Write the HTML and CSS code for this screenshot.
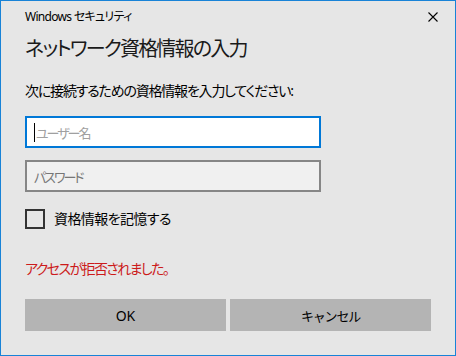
FILE: index.html
```html
<!DOCTYPE html>
<html lang="ja">
<head>
    <meta charset="UTF-8">
    <title>Windows セキュリティ</title>
    <link rel="stylesheet" href="styles.css">
</head>
<body>
    <div class="window">
        <!-- Title bar -->
        <header class="titlebar">
            <span class="app-name">Windows セキュリティ</span>
            <button class="close" aria-label="閉じる">
                <svg width="10" height="10" viewBox="0 0 10 10">
                    <path d="M0.5 0.5 L9.5 9.5 M9.5 0.5 L0.5 9.5" stroke="#000" stroke-width="1.1" fill="none"/>
                </svg>
            </button>
        </header>

        <h1 class="heading">ネットワーク資格情報の入力</h1>
        <p class="prompt">次に接続するための資格情報を入力してください:</p>

        <!-- Credential fields -->
        <div class="field field-focus">
            <span class="caret"></span>
            <span class="placeholder">ユーザー名</span>
        </div>
        <div class="field field-password">
            <span class="placeholder">パスワード</span>
        </div>

        <label class="remember">
            <span class="checkbox"></span>
            <span>資格情報を記憶する</span>
        </label>

        <p class="error">アクセスが拒否されました。</p>

        <div class="actions">
            <button class="btn">OK</button>
            <button class="btn btn-kana">キャンセル</button>
        </div>
    </div>
</body>
</html>
```

FILE: styles.css
```css
/* Reset */
body, h1, p, button {
    margin: 0;
    padding: 0;
}

body {
    font-family: "Noto Sans", "Noto Sans CJK JP", sans-serif;
    font-feature-settings: "palt";
    color: #000;
    background: #e6e6e6;
}

.window {
    width: 456px;
    height: 356px;
    box-sizing: border-box;
    border: 1px solid #1883d7;
    background: #e6e6e6;
    padding: 8px 24px 0 24px;
    display: flex;
    flex-direction: column;
}

/* Title bar */
.titlebar {
    display: flex;
    justify-content: space-between;
    align-items: center;
    height: 16px;
    font-size: 12px;
    line-height: 16px;
}

.app-name {
    letter-spacing: -0.7px;
}

.close {
    border: none;
    background: none;
    width: 10px;
    height: 10px;
    margin-right: -7px;
    display: flex;
}

/* Texts */
.heading {
    margin-top: 10px;
    font-size: 20px;
    font-weight: normal;
    line-height: 28px;
    letter-spacing: -1.8px;
    color: #1a1a1a;
}

.prompt {
    margin-top: 18px;
    font-size: 14px;
    line-height: 20px;
    letter-spacing: -1.2px;
}

/* Fields */
.field {
    box-sizing: border-box;
    width: 296px;
    height: 32px;
    border: 2px solid #868686;
    background: #f0f0f0;
    padding-left: 7px;
    display: flex;
    align-items: center;
    font-size: 13px;
    letter-spacing: -2px;
}

.field-focus {
    margin-top: 15px;
    border-color: #0078d7;
    background: #fff;
}

.field-focus .placeholder {
    color: #a0a0a0;
}

.caret {
    width: 1px;
    height: 19px;
    margin-right: 1px;
    background: #000;
}

.field-password {
    margin-top: 12px;
}

.field-password .placeholder {
    color: #767676;
}

/* Remember checkbox */
.remember {
    margin-top: 17px;
    display: flex;
    align-items: center;
    gap: 9px;
    font-size: 14px;
    line-height: 20px;
    letter-spacing: -0.6px;
}

.checkbox {
    box-sizing: border-box;
    width: 20px;
    height: 20px;
    border: 2px solid #333;
}

.error {
    margin-top: 30px;
    font-size: 14px;
    line-height: 20px;
    letter-spacing: -1.6px;
    color: #cc1b1b;
}

/* Buttons */
.actions {
    margin-top: 20px;
    display: grid;
    grid-template-columns: 1fr 1fr;
    gap: 4px;
}

.btn {
    height: 32px;
    border: none;
    background: #b4b4b4;
    font-family: inherit;
    font-size: 14px;
    color: #000;
}

.btn-kana {
    font-size: 13px;
    letter-spacing: -1.2px;
}
```
